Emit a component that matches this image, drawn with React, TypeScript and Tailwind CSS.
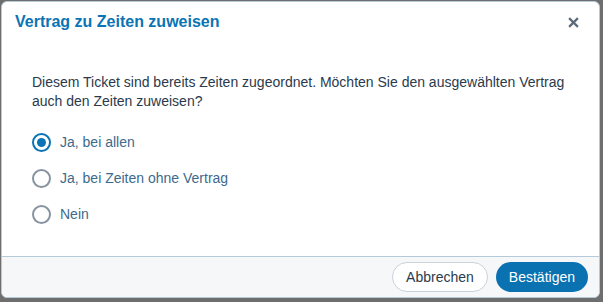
import React, { useState } from "react";

const options = ["Ja, bei allen", "Ja, bei Zeiten ohne Vertrag", "Nein"];

export default function App() {
  const [selected, setSelected] = useState(0);
  return (
    <div className="w-[603px] h-[302px] bg-[#6e6e6e] pt-[1px] pl-[1px] font-['Liberation_Sans',Arial,sans-serif]">
      <div className="w-[599px] h-[297px] bg-white border border-[#b4cad8] rounded-[6px] flex flex-col overflow-hidden">
        <div className="flex items-center justify-between h-[40px] pl-[13px] pr-[20px]">
          <h2 className="text-[16px] font-bold text-[#0b74b4]">Vertrag zu Zeiten zuweisen</h2>
          <button className="text-[#5c6a7a]">
            <svg width="11" height="11" viewBox="0 0 10 10">
              <path d="M1 1L9 9M9 1L1 9" stroke="currentColor" strokeWidth="2" />
            </svg>
          </button>
        </div>
        <div className="flex-1 px-[30px] pt-[31px]">
          <p className="text-[14px] leading-[19px] text-[#2a3a4c]">
            Diesem Ticket sind bereits Zeiten zugeordnet. Möchten Sie den ausgewählten Vertrag auch den Zeiten zuweisen?
          </p>
          <div className="mt-[21px] flex flex-col gap-[16px]">
            {options.map((o, i) => (
              <label key={o} className="flex items-center gap-[9px] cursor-pointer h-[20px]" onClick={() => setSelected(i)}>
                {selected === i ? (
                  <span className="w-[19px] h-[19px] rounded-full border-[2px] border-[#0a74b5] flex items-center justify-center">
                    <span className="w-[9px] h-[9px] rounded-full bg-[#0a74b5]" />
                  </span>
                ) : (
                  <span className="w-[19px] h-[19px] rounded-full border-[2px] border-[#8793a1]" />
                )}
                <span className="text-[14px] text-[#3e6a8c]">{o}</span>
              </label>
            ))}
          </div>
        </div>
        <div className="h-[41px] bg-[#f5f7f9] border-t border-[#b4cad8] flex items-center justify-end gap-[8px] pr-[11px]">
          <button className="h-[30px] px-[13px] rounded-full border border-[#c9d1d9] bg-white text-[14px] text-[#2a3a4c]">
            Abbrechen
          </button>
          <button className="h-[30px] px-[13px] rounded-full bg-[#0a72b1] text-[14px] text-white">
            Bestätigen
          </button>
        </div>
      </div>
    </div>
  );
}
